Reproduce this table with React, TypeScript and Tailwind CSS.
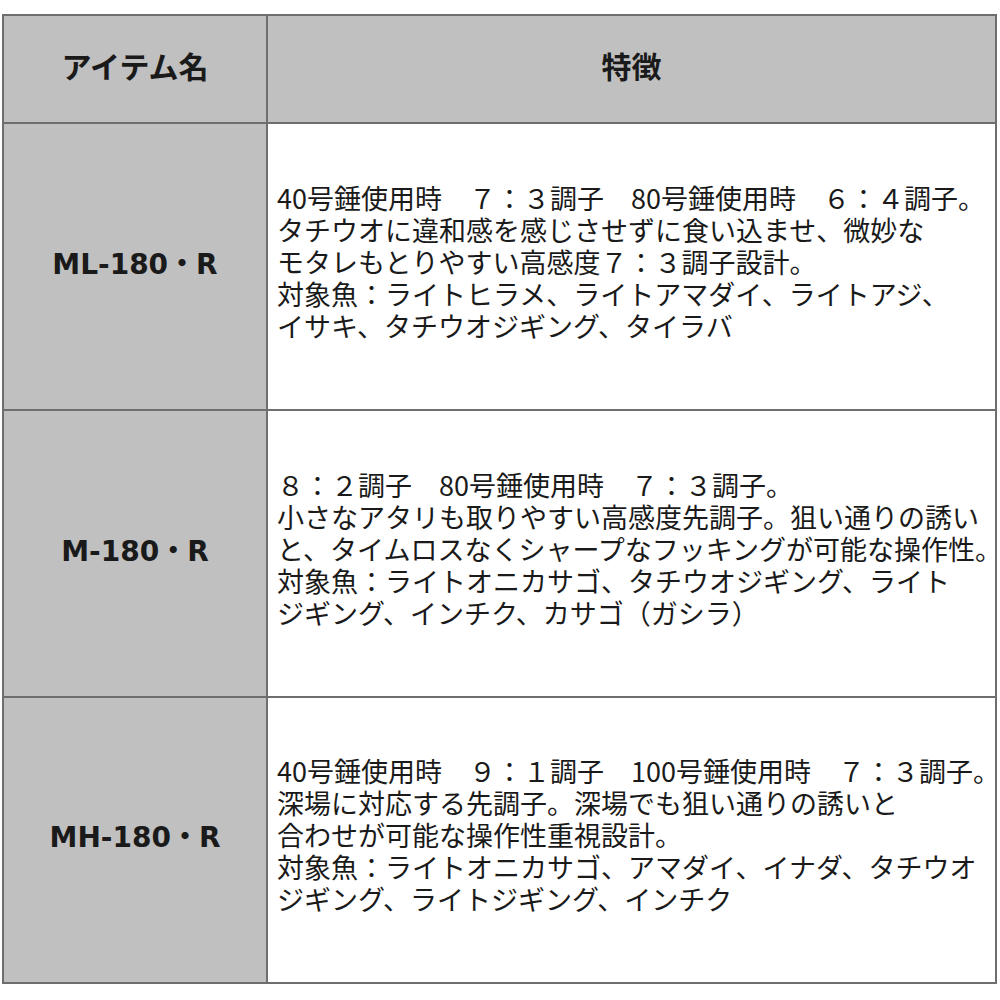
import React from 'react';

type Row = {
  name: string;
  lines: string[];
};

const rows: Row[] = [
  {
    name: 'ML-180・R',
    lines: [
      '40号錘使用時　７：３調子　80号錘使用時　６：４調子。',
      'タチウオに違和感を感じさせずに食い込ませ、微妙な',
      'モタレもとりやすい高感度７：３調子設計。',
      '対象魚：ライトヒラメ、ライトアマダイ、ライトアジ、',
      'イサキ、タチウオジギング、タイラバ',
    ],
  },
  {
    name: 'M-180・R',
    lines: [
      '８：２調子　80号錘使用時　７：３調子。',
      '小さなアタリも取りやすい高感度先調子。狙い通りの誘い',
      'と、タイムロスなくシャープなフッキングが可能な操作性。',
      '対象魚：ライトオニカサゴ、タチウオジギング、ライト',
      'ジギング、インチク、カサゴ（ガシラ）',
    ],
  },
  {
    name: 'MH-180・R',
    lines: [
      '40号錘使用時　９：１調子　100号錘使用時　７：３調子。',
      '深場に対応する先調子。深場でも狙い通りの誘いと',
      '合わせが可能な操作性重視設計。',
      '対象魚：ライトオニカサゴ、アマダイ、イナダ、タチウオ',
      'ジギング、ライトジギング、インチク',
    ],
  },
];

const App: React.FC = () => {
  return (
    <div className="w-[1000px] h-[1000px] bg-white pt-[14px] pl-[2px] font-['Noto_Sans_CJK_JP',sans-serif] text-[#1a1a1a]">
      <div className="w-[995px] grid grid-cols-[264px_729px] grid-rows-[108px_287px_287px_286px] border-l-2 border-t-2 border-[#6e6e6e]">
        {/* Header */}
        <div className="bg-[#c0c0c0] border-r-2 border-b-2 border-[#6e6e6e] flex items-center justify-center pb-[8px]">
          <span className="text-[30px] font-bold">アイテム名</span>
        </div>
        <div className="bg-[#c0c0c0] border-r-2 border-b-2 border-[#6e6e6e] flex items-center justify-center pb-[8px]">
          <span className="text-[30px] font-bold">特徴</span>
        </div>

        {rows.map((row) => (
          <React.Fragment key={row.name}>
            <div className="bg-[#c0c0c0] border-r-2 border-b-2 border-[#6e6e6e] flex items-center justify-center pb-[4px]">
              <span className="text-[28px] font-bold font-['DejaVu_Sans','Noto_Sans_CJK_JP',sans-serif]">
                {row.name}
              </span>
            </div>
            <div className="bg-white border-r-2 border-b-2 border-[#6e6e6e] flex flex-col justify-center pl-[9px] pb-[10px]">
              {row.lines.map((line, i) => (
                <div key={i} className="text-[27px] leading-[32px] whitespace-nowrap">
                  {line}
                </div>
              ))}
            </div>
          </React.Fragment>
        ))}
      </div>
    </div>
  );
};

export default App;
